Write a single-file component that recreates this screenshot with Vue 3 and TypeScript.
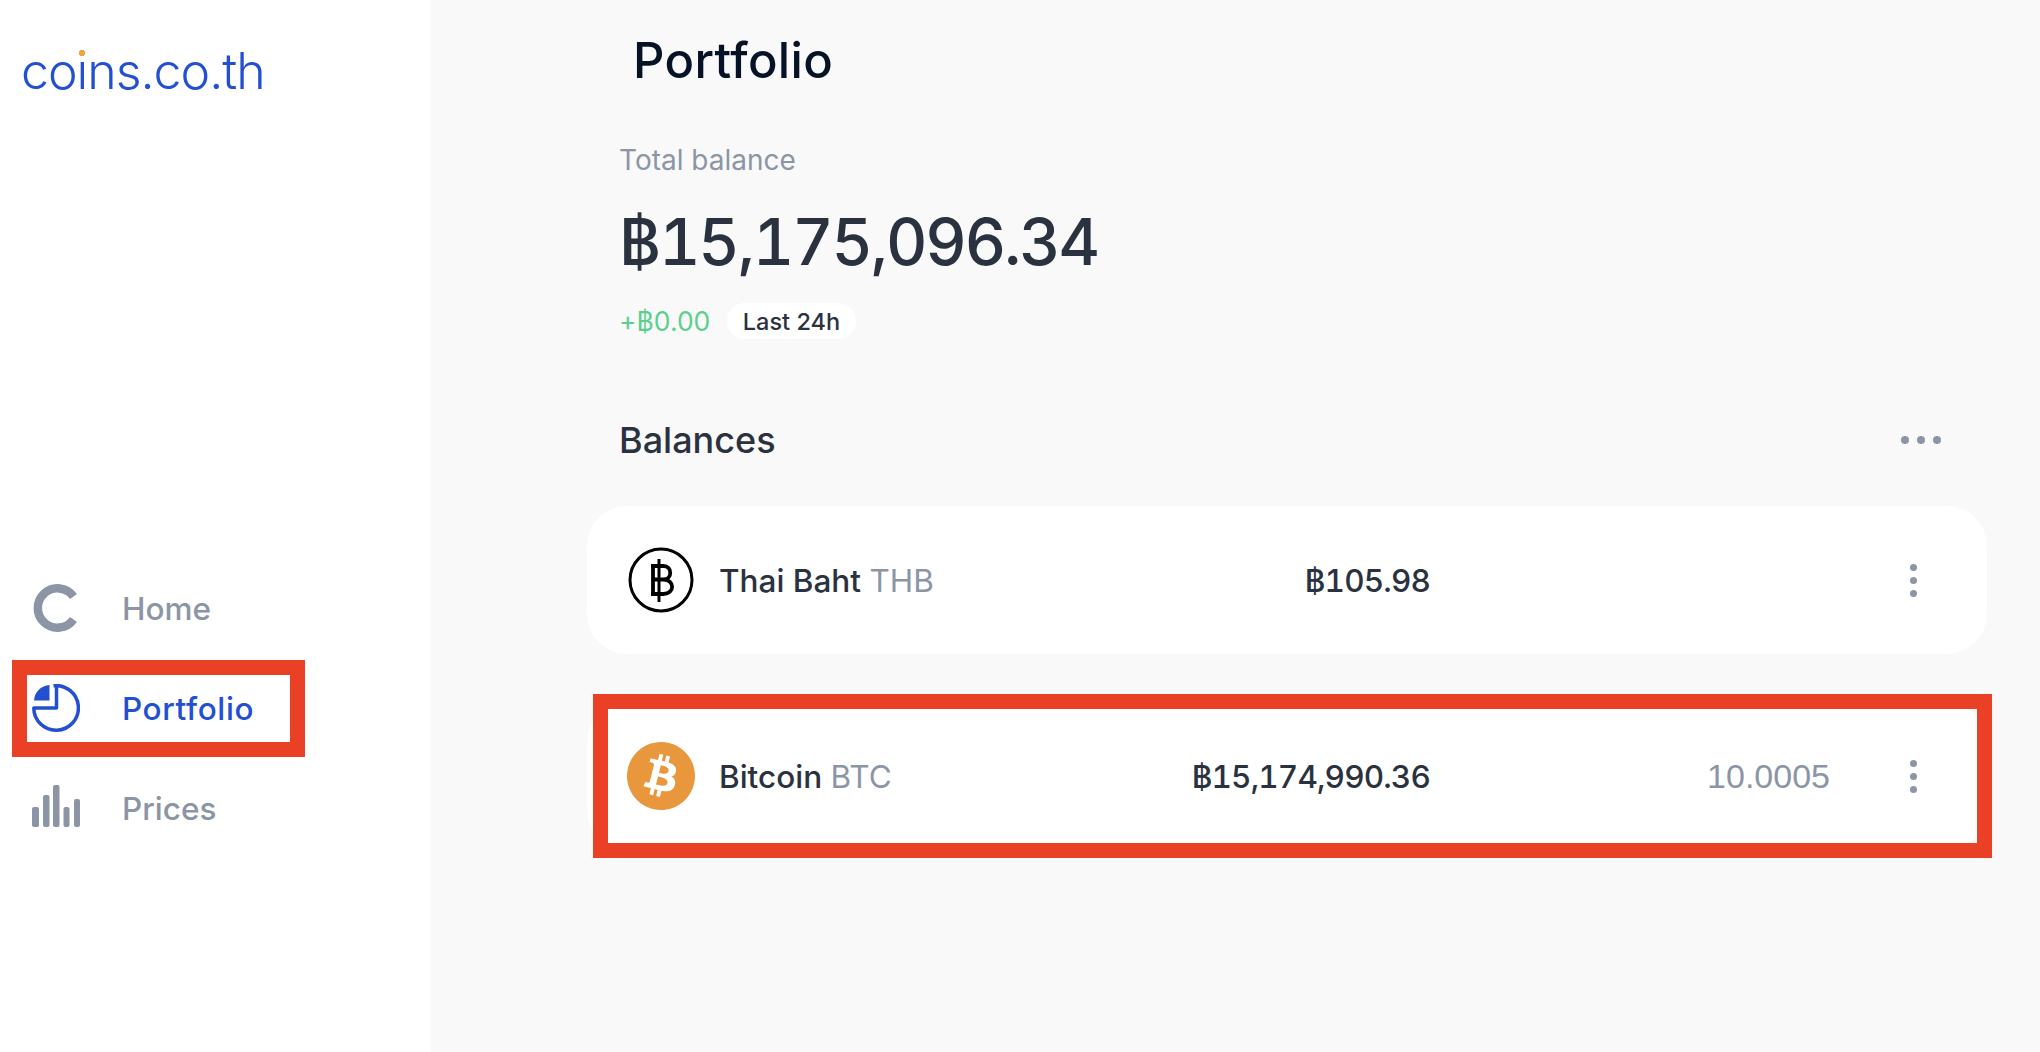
<script setup lang="ts">
interface Row { id: string; name: string; code: string; amount: string; qty: string; marked: boolean }
const rows: Row[] = [
  { id: 'thb', name: 'Thai Baht', code: 'THB', amount: '฿105.98', qty: '', marked: false },
  { id: 'btc', name: 'Bitcoin', code: 'BTC', amount: '฿15,174,990.36', qty: '10.0005', marked: true },
]
</script>

<template>
  <div class="app">
    <aside class="sidebar">
      <div class="logo">co<span class="logo-i">i</span>ns.co.th</div>
      <nav class="nav">
        <a class="nav-item">
          <svg class="nav-icon" viewBox="0 0 48 48" width="48" height="48">
            <path d="M41.5 12.5A19.7 19.7 0 1 0 41.5 35.5" fill="none" stroke="#8b95a5" stroke-width="8.5" />
          </svg>
          <span>Home</span>
        </a>
        <a class="nav-item active">
          <svg class="nav-icon" viewBox="0 0 48 48" width="48" height="48">
            <path d="M21.5 1.8A22.3 22.3 0 1 1 1.8 24H24.5V1.8" fill="none" stroke="#2350d0" stroke-width="3.5" stroke-linejoin="round" />
            <path d="M17.5 1V16.5H2A16.5 16.5 0 0 1 17.5 1Z" fill="#2350d0" />
          </svg>
          <span>Portfolio</span>
          <i class="mark mark-nav"></i>
        </a>
        <a class="nav-item">
          <svg class="nav-icon" viewBox="0 0 48 48" width="48" height="48" fill="#8b95a5">
            <rect x="0" y="23" width="7" height="20" rx="2" />
            <rect x="11" y="11" width="6.5" height="32" rx="2" />
            <rect x="21" y="1" width="6.5" height="42" rx="2" />
            <rect x="31.5" y="23" width="6" height="20" rx="2" />
            <rect x="42" y="15" width="6" height="28" rx="2" />
          </svg>
          <span>Prices</span>
        </a>
      </nav>
    </aside>

    <main class="main">
      <h1 class="title">Portfolio</h1>
      <div class="total-label">Total balance</div>
      <div class="total">฿15,175,096.34</div>
      <div class="change">
        <span class="delta">+฿0.00</span>
        <span class="pill">Last 24h</span>
      </div>
      <div class="section-head">
        <h2>Balances</h2>
        <div class="hdots"><i></i><i></i><i></i></div>
      </div>
      <div class="rows">
        <div v-for="r in rows" :key="r.id" class="card">
          <svg v-if="r.id === 'thb'" class="coin" viewBox="0 0 68 68" width="68" height="68">
            <circle cx="34" cy="34" r="31" fill="#fff" stroke="#000" stroke-width="3" />
            <path d="M32 13V56" stroke="#000" stroke-width="3" fill="none" />
            <path d="M26 20V48M24 20H36.5C45.5 20 45.5 33.5 36.5 33.5H27M36.5 33.5C48 33.5 48 48 36.5 48H24" stroke="#000" stroke-width="3.8" fill="none" />
          </svg>
          <svg v-else class="coin" viewBox="0 0 24 24" width="68" height="68">
            <path fill="#e8973c" d="M23.638 14.904c-1.602 6.43-8.113 10.34-14.542 8.736C2.67 22.05-1.244 15.525.362 9.105 1.962 2.67 8.475-1.243 14.9.358c6.43 1.605 10.342 8.115 8.738 14.548v-.002zm-6.35-4.613c.24-1.59-.974-2.45-2.64-3.03l.54-2.153-1.315-.33-.525 2.107c-.345-.087-.705-.167-1.064-.25l.526-2.127-1.32-.33-.54 2.165c-.285-.067-.565-.132-.84-.2l-1.815-.45-.35 1.407s.975.225.955.236c.535.136.63.486.615.766l-1.477 5.92c-.075.166-.24.406-.614.314.015.02-.96-.24-.96-.24l-.66 1.51 1.71.426.93.242-.54 2.19 1.32.327.54-2.17c.36.1.705.19 1.05.273l-.51 2.154 1.32.33.545-2.19c2.24.427 3.93.257 4.64-1.774.57-1.637-.03-2.58-1.217-3.196.854-.193 1.5-.76 1.68-1.93h.01zm-3.01 4.22c-.404 1.64-3.157.75-4.05.53l.72-2.9c.896.23 3.757.67 3.33 2.37zm.41-4.24c-.37 1.49-2.662.735-3.405.55l.654-2.64c.744.18 3.137.524 2.75 2.084v.006z" />
          </svg>
          <div class="name">{{ r.name }} <span class="code">{{ r.code }}</span></div>
          <div class="amount">{{ r.amount }}</div>
          <div class="qty">{{ r.qty }}</div>
          <div class="vdots"><i></i><i></i><i></i></div>
          <i v-if="r.marked" class="mark mark-card"></i>
        </div>
      </div>
    </main>
  </div>
</template>

<style>
body { margin: 0; }
</style>

<style scoped>
.app {
  display: flex;
  height: 1052px;
  overflow: hidden;
  font-family: Inter, "Noto Sans", sans-serif;
  background: #f9f9f9;
}
.sidebar {
  width: 430px;
  flex: none;
  background: #fff;
  display: flex;
  flex-direction: column;
}
.logo {
  margin: 36px 0 0 21px;
  font-size: 50px;
  line-height: 70px;
  font-weight: 300;
  letter-spacing: -1px;
  color: #2350d0;
}
.logo-i { position: relative; display: inline-block; }
.logo-i::after {
  content: "";
  position: absolute;
  left: 50%;
  top: 12px;
  width: 10px;
  height: 10px;
  margin-left: -5px;
  border-radius: 50%;
  background: radial-gradient(circle, #eca445 0 3px, #fff 3.5px);
}
.nav {
  margin-top: 452px;
  display: flex;
  flex-direction: column;
}
.nav-item {
  position: relative;
  height: 100px;
  display: flex;
  align-items: center;
  padding-left: 32px;
  gap: 42px;
  font-size: 31.5px;
  font-weight: 500;
  color: #8b95a5;
}
.nav-item.active { color: #2350d0; letter-spacing: .6px; }
.nav-icon { flex: none; }
.mark {
  position: absolute;
  box-sizing: border-box;
  border: 15px solid #ea4025;
  display: block;
  pointer-events: none;
}
.mark-nav { left: 12px; top: 2px; width: 293px; height: 97px; }
.main {
  flex: 1;
  padding: 31px 53px 0 157px;
  display: flex;
  flex-direction: column;
  align-items: stretch;
}
.title {
  margin: 0 0 0 46px;
  font-size: 49px;
  line-height: 60px;
  font-weight: 500;
  letter-spacing: .35px;
  color: #061326;
}
.total-label {
  margin: 51px 0 0 32px;
  font-size: 28px;
  line-height: 36px;
  color: #8b95a5;
}
.total {
  margin: 24px 0 0 32px;
  font-size: 64px;
  line-height: 80px;
  font-weight: 500;
  font-variant-numeric: tabular-nums;
  letter-spacing: -2.1px;
  color: #2a3240;
}
.change {
  margin: 21px 0 0 32px;
  height: 36px;
  display: flex;
  align-items: center;
  gap: 17px;
}
.delta { font-size: 26.5px; color: #5cd08f; }
.pill {
  height: 36px;
  padding: 0 15.5px;
  display: flex;
  align-items: center;
  border-radius: 18px;
  background: #fff;
  font-size: 23.5px;
  font-weight: 500;
  color: #2a3240;
}
.section-head {
  margin: 79px 46px 0 32px;
  height: 44px;
  display: flex;
  align-items: center;
  justify-content: space-between;
}
.section-head h2 {
  margin: 0;
  font-size: 36px;
  font-weight: 500;
  color: #2a3240;
}
.hdots { display: flex; gap: 8px; }
.hdots i { width: 8px; height: 8px; border-radius: 50%; background: #8b95a5; }
.rows {
  margin-top: 44px;
  display: flex;
  flex-direction: column;
  gap: 48px;
}
.card {
  position: relative;
  height: 148px;
  box-sizing: border-box;
  padding-left: 40px;
  background: #fff;
  border-radius: 40px;
  display: grid;
  grid-template-columns: 92px 1fr auto 400px 157px;
  align-items: center;
}
.name { font-size: 31.5px; font-weight: 500; color: #2a3240; }
.code { color: #8b95a5; font-weight: 400; }
.amount { font-size: 31.5px; font-weight: 500; font-variant-numeric: tabular-nums; letter-spacing: -.85px; color: #2a3240; text-align: right; }
.qty {
  font-family: "Liberation Sans", Arial, sans-serif;
  font-size: 34px;
  color: #8b95a5;
  text-align: right;
}
.vdots {
  margin-left: 80px;
  display: flex;
  flex-direction: column;
  gap: 6px;
  width: 7px;
}
.vdots i { width: 7px; height: 7px; border-radius: 50%; background: #8b95a5; }
.mark-card { left: 6px; right: -5px; top: -8px; bottom: -8px; }
</style>
